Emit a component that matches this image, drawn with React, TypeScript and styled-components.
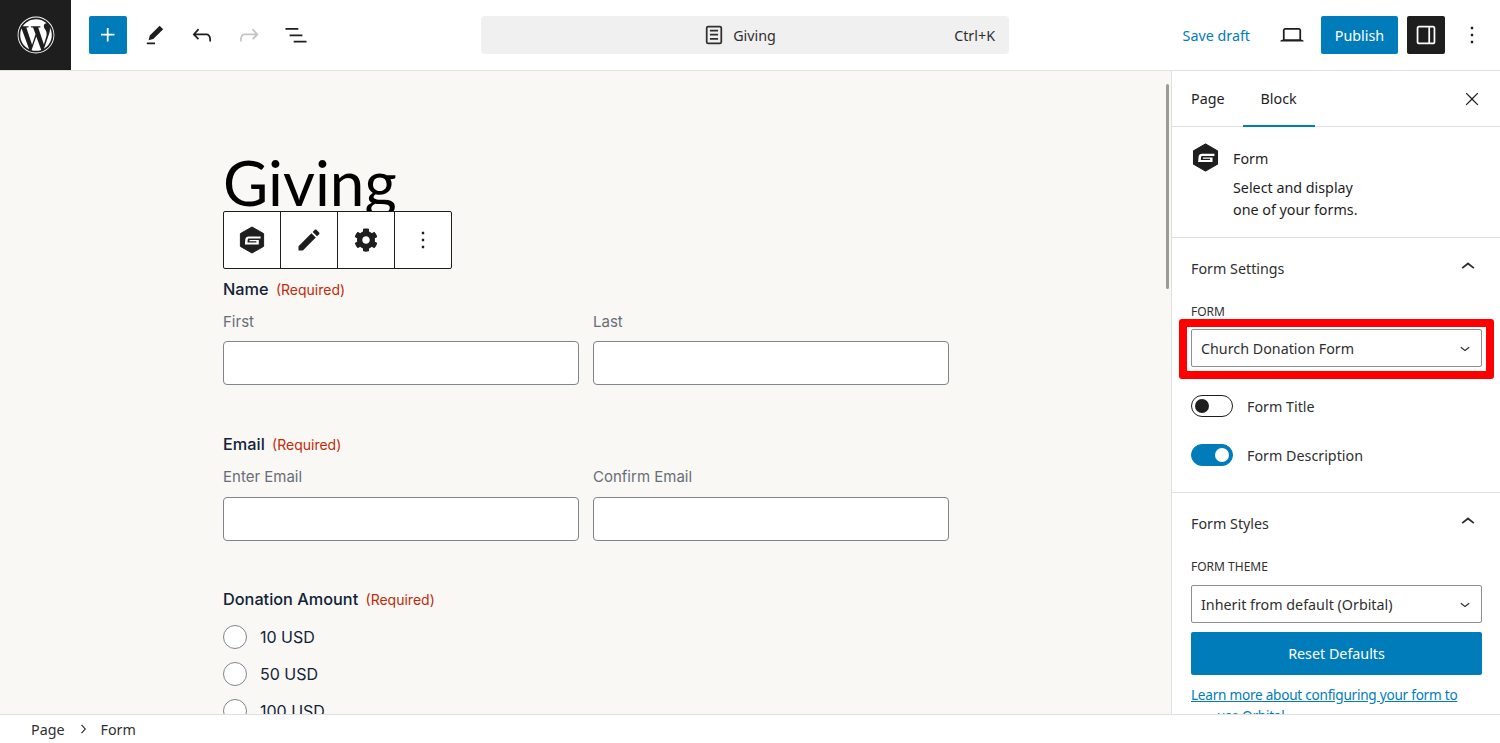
import styled, { createGlobalStyle } from 'styled-components';
import { FaCog, FaWordpress } from 'react-icons/fa';

const Global = createGlobalStyle`
	html, body {
		margin: 0;
		padding: 0;
		height: 100%;
		overflow: hidden;
		background: #fff;
	}
	* {
		box-sizing: border-box;
	}
`;

const UI_FONT = `'Noto Sans', 'Open Sans', sans-serif`;
const FORM_FONT = `Inter, 'Liberation Sans', sans-serif`;
const BLUE = '#007cba';
const DARK = '#1e1e1e';

const PATHS = {
	plus: 'M11 12.5V17.5H12.5V12.5H17.5V11H12.5V6H11V11H6V12.5H11Z',
	tool: 'm19 7-3-3-8.5 8.5-1 4 4-1L19 7Zm-7 11.5H5V20h7v-1.5Z',
	undo: 'M18.3 11.7c-.6-.6-1.4-.9-2.3-.9H6.7l2.9-3.3-1.1-1-4.5 5L8.5 16l1-1-2.7-2.7H16c.5 0 .9.2 1.3.5 1 1 1 3.4 1 4.5v.3h1.5v-.2c0-1.5 0-4.3-1.5-5.7z',
	redo: 'M15.6 6.5l-1.1 1 2.9 3.3H8c-.9 0-1.7.3-2.3.9-1.4 1.5-1.4 4.2-1.4 5.6v.2h1.5v-.3c0-1.1 0-3.5 1-4.5.3-.3.7-.5 1.3-.5h9.2L14.5 15l1.1 1.1 4.6-4.6-4.6-5z',
	list: 'M3 6h11v1.5H3V6Zm3.5 5.5h11V13h-11v-1.5ZM21 17H10v1.5h11V17Z',
	laptop: 'M20.5 16h-.7V8c0-1.1-.9-2-2-2H6.2c-1.1 0-2 .9-2 2v8h-.7c-.8 0-1.5.7-1.5 1.5h20c0-.8-.7-1.5-1.5-1.5zM5.7 8c0-.3.2-.5.5-.5h11.6c.3 0 .5.2.5.5v7.6H5.7V8z',
	sidebar: 'M18 4H6c-1.1 0-2 .9-2 2v12c0 1.1.9 2 2 2h12c1.1 0 2-.9 2-2V6c0-1.1-.9-2-2-2zM5.5 18V6c0-.3.2-.5.5-.5h8v13H6c-.3 0-.5-.2-.5-.5zm13 0c0 .3-.2.5-.5.5h-2.5v-13H18c.3 0 .5.2.5.5v12z',
	more: 'M13 19h-2v-2h2v2zm0-6h-2v-2h2v2zm0-6h-2V5h2v2z',
	page: 'M15.5 7.5h-7V9h7V7.5Zm-7 3.5h7v1.5h-7V11Zm7 3.5h-7V16h7v-1.5ZM17 4H7a2 2 0 0 0-2 2v12a2 2 0 0 0 2 2h10a2 2 0 0 0 2-2V6a2 2 0 0 0-2-2Zm0 1.5a.5.5 0 0 1 .5.5v12a.5.5 0 0 1-.5.5H7a.5.5 0 0 1-.5-.5V6a.5.5 0 0 1 .5-.5h10Z',
	close: 'm13.06 12 6.47-6.47-1.06-1.06L12 10.94 5.53 4.47 4.47 5.53 10.94 12l-6.47 6.47 1.06 1.06L12 13.06l6.47 6.47 1.06-1.06L13.06 12Z',
	up: 'M6.5 12.4L12 8l5.5 4.4-.9 1.2L12 10l-4.5 3.6-1-1.2z',
	down: 'M17.5 11.6L12 16l-5.5-4.4.9-1.2L12 14l4.5-3.6 1 1.2z',
	right: 'M10.6 6L9.4 7l4.6 5-4.6 5 1.2 1 5.4-6z',
	pencil: 'M3 17.25V21h3.75L17.81 9.94l-3.75-3.75L3 17.25zM20.71 7.04c.39-.39.39-1.02 0-1.41l-2.34-2.34c-.39-.39-1.02-.39-1.41 0l-1.83 1.83 3.75 3.75 1.83-1.83z',
};

function Icon({ name, size = 28, color = 'currentColor' }: { name: keyof typeof PATHS; size?: number; color?: string }) {
	return (
		<svg width={size} height={size} viewBox="0 0 24 24" fill={color} aria-hidden>
			<path d={PATHS[name]} fillRule="evenodd" />
		</svg>
	);
}

function GravityIcon({ size = 28 }: { size?: number }) {
	return (
		<svg width={size} height={size} viewBox="0 0 28 28" aria-hidden>
			<path d="M14 1 25.6 7.6V20.4L14 27 2.4 20.4V7.6Z" fill={DARK} stroke={DARK} strokeLinejoin="round" />
			<path
				d="M22.6 10.4H10.8C8.8 10.4 7.5 11.6 7.3 13.4L6.9 18.4H20.8V13.9H11.5V15.2H18.4V16.5H9.5L9.7 13.6C9.8 13 10.3 12.5 10.9 12.5H22.6Z"
				fill="#fff"
			/>
		</svg>
	);
}

export default function App() {
	return (
		<Page>
			<Global />
			<TopBar>
				<LogoTile>
					<FaWordpress size={38} color="#fff" />
				</LogoTile>
				<LeftTools>
					<PrimaryIconButton>
						<Icon name="plus" />
					</PrimaryIconButton>
					<ToolButton>
						<Icon name="tool" />
					</ToolButton>
					<ToolButton>
						<Icon name="undo" />
					</ToolButton>
					<ToolButton $disabled>
						<Icon name="redo" />
					</ToolButton>
					<ToolButton>
						<Icon name="list" />
					</ToolButton>
				</LeftTools>
				<CommandBar>
					<CommandTitle>
						<Icon name="page" />
						<span>Giving</span>
					</CommandTitle>
					<Shortcut>Ctrl+K</Shortcut>
				</CommandBar>
				<RightTools>
					<SaveDraft>Save draft</SaveDraft>
					<ToolButton>
						<Icon name="laptop" />
					</ToolButton>
					<PublishButton>Publish</PublishButton>
					<SidebarToggle>
						<Icon name="sidebar" />
					</SidebarToggle>
					<MoreButton>
						<Icon name="more" />
					</MoreButton>
				</RightTools>
			</TopBar>

			<Workspace>
				<Canvas>
					<Scrollbar />
					<Title>Giving</Title>
					<FormBlock>
						<BlockToolbar>
							<BlockToolButton>
								<GravityIcon />
							</BlockToolButton>
							<BlockToolButton>
								<Icon name="pencil" />
							</BlockToolButton>
							<BlockToolButton>
								<FaCog size={24} />
							</BlockToolButton>
							<BlockToolButton>
								<Icon name="more" />
							</BlockToolButton>
						</BlockToolbar>

						<FieldGroup>
							<FieldLabel>
								Name <Required>(Required)</Required>
							</FieldLabel>
							<FieldRow>
								<SubField>
									<SubLabel>First</SubLabel>
									<TextBox />
								</SubField>
								<SubField>
									<SubLabel>Last</SubLabel>
									<TextBox />
								</SubField>
							</FieldRow>
						</FieldGroup>

						<FieldGroup>
							<FieldLabel>
								Email <Required>(Required)</Required>
							</FieldLabel>
							<FieldRow>
								<SubField>
									<SubLabel>Enter Email</SubLabel>
									<TextBox />
								</SubField>
								<SubField>
									<SubLabel>Confirm Email</SubLabel>
									<TextBox />
								</SubField>
							</FieldRow>
						</FieldGroup>

						<FieldGroup>
							<FieldLabel>
								Donation Amount <Required>(Required)</Required>
							</FieldLabel>
							<RadioList>
								{['10 USD', '50 USD', '100 USD'].map((amount) => (
									<RadioRow key={amount}>
										<RadioCircle />
										<span>{amount}</span>
									</RadioRow>
								))}
							</RadioList>
						</FieldGroup>
					</FormBlock>
				</Canvas>

				<Sidebar>
					<Tabs>
						<Tab>Page</Tab>
						<Tab $active>Block</Tab>
						<CloseButton>
							<Icon name="close" size={20} />
						</CloseButton>
					</Tabs>

					<BlockCard>
						<GravityIcon size={29} />
						<BlockCardText>
							<BlockCardName>Form</BlockCardName>
							<BlockCardDescription>
								Select and display
								<br />
								one of your forms.
							</BlockCardDescription>
						</BlockCardText>
					</BlockCard>

					<Panel>
						<PanelHeader>
							<span>Form Settings</span>
							<Icon name="up" />
						</PanelHeader>
						<ControlLabel>FORM</ControlLabel>
						<Highlighted>
							<SelectBox>
								<span>Church Donation Form</span>
								<Icon name="down" size={20} />
							</SelectBox>
						</Highlighted>
						<ToggleRow>
							<Toggle />
							<span>Form Title</span>
						</ToggleRow>
						<ToggleRow>
							<Toggle $on />
							<span>Form Description</span>
						</ToggleRow>
					</Panel>

					<Panel>
						<PanelHeader>
							<span>Form Styles</span>
							<Icon name="up" />
						</PanelHeader>
						<ControlLabel>FORM THEME</ControlLabel>
						<ThemeSelect>
							<span>Inherit from default (Orbital)</span>
							<Icon name="down" size={20} />
						</ThemeSelect>
						<ResetButton>Reset Defaults</ResetButton>
						<HelpLink>
							Learn more about configuring your form to
							<br />
							<LinkIndent>use Orbital.</LinkIndent>
						</HelpLink>
					</Panel>
				</Sidebar>
			</Workspace>

			<Breadcrumbs>
				<span>Page</span>
				<Icon name="right" size={18} />
				<span>Form</span>
			</Breadcrumbs>
		</Page>
	);
}

const Page = styled.div`
	width: 1500px;
	height: 743px;
	display: flex;
	flex-direction: column;
	overflow: hidden;
	font-family: ${UI_FONT};
	color: ${DARK};
	background: #fff;
`;

const TopBar = styled.header`
	flex: 0 0 71px;
	display: flex;
	align-items: center;
	border-bottom: 1px solid #e0e0e0;
`;

const LogoTile = styled.div`
	width: 71px;
	height: 70px;
	display: flex;
	align-items: center;
	justify-content: center;
	background: ${DARK};
`;

const LeftTools = styled.div`
	display: flex;
	align-items: center;
	gap: 9px;
	margin-left: 18px;
	width: 392px;
`;

const ToolButton = styled.button<{ $disabled?: boolean }>`
	width: 38px;
	height: 38px;
	display: flex;
	align-items: center;
	justify-content: center;
	padding: 0;
	border: none;
	border-radius: 2px;
	background: transparent;
	color: ${(p) => (p.$disabled ? '#c4c4c4' : DARK)};
`;

const PrimaryIconButton = styled(ToolButton)`
	background: ${BLUE};
	color: #fff;
`;

const CommandBar = styled.div`
	position: relative;
	width: 528px;
	height: 38px;
	display: flex;
	align-items: center;
	justify-content: center;
	border-radius: 4px;
	background: #f0f0f0;
	font-size: 14.3px;
	color: #2f2f2f;
`;

const CommandTitle = styled.div`
	display: flex;
	align-items: center;
	gap: 5px;
	padding-right: 14px;
`;

const Shortcut = styled.span`
	position: absolute;
	right: 14px;
`;

const RightTools = styled.div`
	margin-left: auto;
	display: flex;
	align-items: center;
	padding-right: 9px;
`;

const SaveDraft = styled.span`
	font-size: 14.3px;
	color: ${BLUE};
	margin-right: 23px;
`;

const PublishButton = styled.button`
	width: 77px;
	height: 38px;
	margin: 0 9px 0 10px;
	border: none;
	border-radius: 2px;
	background: ${BLUE};
	color: #fff;
	font-family: ${UI_FONT};
	font-size: 14.3px;
`;

const SidebarToggle = styled(ToolButton)`
	background: ${DARK};
	color: #fff;
`;

const MoreButton = styled(ToolButton)`
	margin-left: 8px;
`;

const Workspace = styled.main`
	flex: 1;
	min-height: 0;
	display: flex;
`;

const Canvas = styled.section`
	position: relative;
	flex: 1;
	min-width: 0;
	overflow: hidden;
	padding: 77px 0 0 223px;
	background: #f9f8f5;
`;

const Scrollbar = styled.div`
	position: absolute;
	top: 13px;
	right: 2px;
	width: 3px;
	height: 205px;
	border-radius: 2px;
	background: #9a9c96;
`;

const Title = styled.h1`
	margin: 0;
	height: 69px;
	font-family: Lato, sans-serif;
	font-size: 62px;
	font-weight: 400;
	line-height: 68px;
	color: #000;
`;

const FormBlock = styled.div`
	position: relative;
	width: 727px;
	padding-top: 68px;
	margin-top: -6px;
	font-family: ${FORM_FONT};
`;

const BlockToolbar = styled.div`
	position: absolute;
	top: 0;
	left: 0;
	display: flex;
	height: 58px;
	border: 1px solid ${DARK};
	border-radius: 2px;
	background: #fff;
`;

const BlockToolButton = styled.div`
	width: 57px;
	display: flex;
	align-items: center;
	justify-content: center;
	color: ${DARK};

	&:first-child {
		width: 56px;
	}

	& + & {
		border-left: 1px solid ${DARK};
	}
`;

const FieldGroup = styled.div`
	margin-bottom: 48.8px;
`;

const FieldLabel = styled.div`
	height: 20px;
	font-size: 16.3px;
	font-weight: 500;
	line-height: 20px;
	color: #112337;
`;

const Required = styled.span`
	margin-left: 3px;
	font-size: 14px;
	font-weight: 400;
	color: #c02b0a;
`;

const FieldRow = styled.div`
	display: grid;
	grid-template-columns: 356px 356px;
	gap: 14px;
	margin-top: 13px;
`;

const SubField = styled.div`
	display: flex;
	flex-direction: column;
	gap: 9.4px;
`;

const SubLabel = styled.div`
	height: 20px;
	font-size: 15px;
	line-height: 20px;
	color: #686e77;
`;

const TextBox = styled.div`
	height: 44px;
	border: 1px solid #7f858c;
	border-radius: 4px;
	background: #fff;
`;

const RadioList = styled.div`
	display: flex;
	flex-direction: column;
	gap: 13px;
	margin-top: 16px;
`;

const RadioRow = styled.div`
	display: flex;
	align-items: center;
	gap: 13px;
	height: 24px;
	font-size: 16px;
	color: #112337;
`;

const RadioCircle = styled.span`
	width: 24px;
	height: 24px;
	border: 1px solid #7f858c;
	border-radius: 50%;
	background: #fff;
`;

const Sidebar = styled.aside`
	flex: 0 0 329px;
	overflow: hidden;
	border-left: 1px solid #e0e0e0;
	background: #fff;
`;

const Tabs = styled.div`
	height: 56px;
	display: flex;
	align-items: stretch;
	border-bottom: 1px solid #e0e0e0;
`;

const Tab = styled.div<{ $active?: boolean }>`
	display: flex;
	align-items: center;
	padding: 0 18px;
	margin-bottom: -1px;
	font-size: 14.3px;
	border-bottom: 2px solid ${(p) => (p.$active ? BLUE : 'transparent')};

	&:first-child {
		padding-left: 19px;
	}
`;

const CloseButton = styled.div`
	margin-left: auto;
	margin-right: 18px;
	display: flex;
	align-items: center;
`;

const BlockCard = styled.div`
	height: 111px;
	display: flex;
	gap: 13px;
	padding: 16px 19px 0;
	border-bottom: 1px solid #e0e0e0;
`;

const BlockCardText = styled.div`
	display: flex;
	flex-direction: column;
	font-size: 14.3px;
`;

const BlockCardName = styled.div`
	height: 32px;
	margin-bottom: 2px;
	line-height: 32px;
`;

const BlockCardDescription = styled.div`
	line-height: 22px;
`;

const Panel = styled.div`
	padding: 0 18px 26px 19px;
	border-bottom: 1px solid #e0e0e0;
`;

const PanelHeader = styled.div`
	height: 60px;
	display: flex;
	align-items: center;
	justify-content: space-between;
	font-size: 14.3px;
	color: #2f2f2f;

	svg {
		margin-top: -2px;
	}
`;

const ControlLabel = styled.div`
	height: 18px;
	margin-top: 5px;
	font-size: 12px;
	line-height: 18px;
	color: #2f2f2f;
`;

const SelectBox = styled.div`
	height: 38px;
	display: flex;
	align-items: center;
	justify-content: space-between;
	padding: 0 6px 0 9px;
	border: 1px solid #8c8f94;
	border-radius: 2px;
	font-size: 14.3px;
	color: #2f2f2f;
	background: #fff;
`;

const ThemeSelect = styled(SelectBox)`
	margin-top: 9px;
`;

const Highlighted = styled.div`
	position: relative;
	margin: 8px 0 28px;

	&::after {
		content: '';
		position: absolute;
		inset: -10px -12px -12px -12px;
		border: 8px solid #f00;
		border-radius: 3px;
	}
`;

const ToggleRow = styled.div`
	display: flex;
	align-items: center;
	gap: 14px;
	height: 22px;
	font-size: 14.3px;
	color: #2f2f2f;

	& + & {
		margin-top: 27px;
	}
`;

const Toggle = styled.span<{ $on?: boolean }>`
	position: relative;
	width: 42px;
	height: 22px;
	border: 1px solid ${(p) => (p.$on ? BLUE : DARK)};
	border-radius: 11px;
	background: ${(p) => (p.$on ? BLUE : '#fff')};

	&::after {
		content: '';
		position: absolute;
		top: 3px;
		left: ${(p) => (p.$on ? '23px' : '3px')};
		width: 14px;
		height: 14px;
		border-radius: 50%;
		background: ${(p) => (p.$on ? '#fff' : DARK)};
	}
`;

const ResetButton = styled.div`
	height: 43px;
	margin-top: 9px;
	display: flex;
	align-items: center;
	justify-content: center;
	border-radius: 2px;
	background: ${BLUE};
	color: #fff;
	font-size: 14.3px;
`;

const HelpLink = styled.div`
	margin-top: 9px;
	font-size: 13.6px;
	letter-spacing: -0.25px;
	line-height: 21px;
	white-space: nowrap;
	color: ${BLUE};
	text-decoration: underline;
`;

const LinkIndent = styled.span`
	margin-left: 26px;
`;

const Breadcrumbs = styled.footer`
	flex: 0 0 29px;
	display: flex;
	align-items: center;
	gap: 9px;
	padding-left: 31px;
	border-top: 1px solid #e0e0e0;
	background: #fff;
	font-size: 14.3px;
	color: #2f2f2f;
`;
